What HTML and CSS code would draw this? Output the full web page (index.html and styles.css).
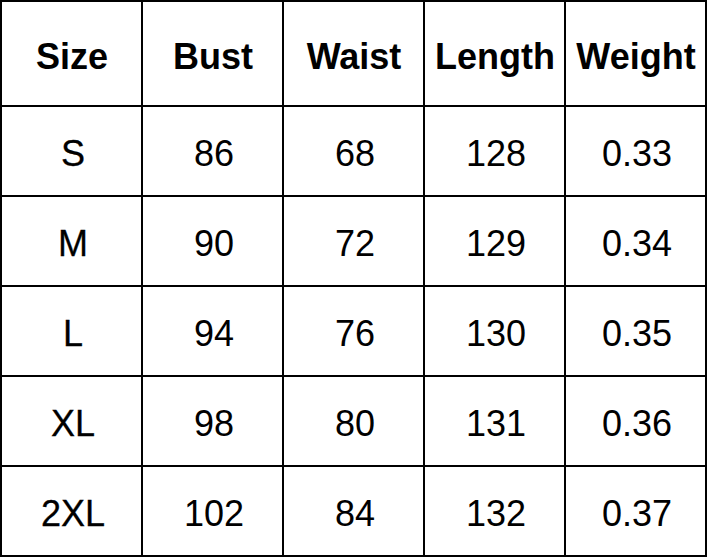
FILE: index.html
```html
<!DOCTYPE html>
<html>
<head>
<meta charset="utf-8">
<link rel="stylesheet" href="styles.css">
</head>
<body>
<div class="grid">
  <div class="cell head">Size</div>
  <div class="cell head">Bust</div>
  <div class="cell head">Waist</div>
  <div class="cell head">Length</div>
  <div class="cell head">Weight</div>

  <div class="cell size">S</div>
  <div class="cell">86</div>
  <div class="cell">68</div>
  <div class="cell">128</div>
  <div class="cell">0.33</div>

  <div class="cell size">M</div>
  <div class="cell">90</div>
  <div class="cell">72</div>
  <div class="cell">129</div>
  <div class="cell">0.34</div>

  <div class="cell size">L</div>
  <div class="cell">94</div>
  <div class="cell">76</div>
  <div class="cell">130</div>
  <div class="cell">0.35</div>

  <div class="cell size">XL</div>
  <div class="cell">98</div>
  <div class="cell">80</div>
  <div class="cell">131</div>
  <div class="cell">0.36</div>

  <div class="cell size">2XL</div>
  <div class="cell">102</div>
  <div class="cell">84</div>
  <div class="cell">132</div>
  <div class="cell">0.37</div>
</div>
</body>
</html>
```
FILE: styles.css
```css
html, body {
  margin: 0;
  padding: 0;
  background: #fff;
}
.grid {
  width: 707px;
  box-sizing: border-box;
  display: grid;
  grid-template-columns: repeat(5, 139px);
  grid-template-rows: 103px repeat(5, 88px);
  gap: 2px;
  padding: 2px;
  background: #000;
  font-family: "Liberation Sans", Arial, sans-serif;
  color: #000;
}
.cell {
  background: #fff;
  display: flex;
  align-items: center;
  justify-content: center;
  font-size: 36px;
  padding-top: 6px;
  padding-left: 3px;
  box-sizing: border-box;
  white-space: nowrap;
}
.head {
  font-weight: bold;
  padding-top: 7px;
  padding-left: 1px;
}
.size {
  -webkit-text-stroke: 0.3px #000;
}
```
